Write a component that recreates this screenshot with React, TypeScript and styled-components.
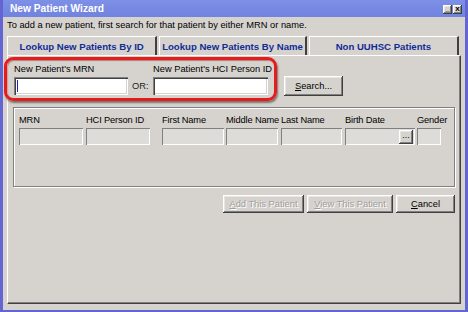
import React from "react";
import styled, { createGlobalStyle } from "styled-components";

const Global = createGlobalStyle`
  html, body { margin: 0; padding: 0; background: #d6d3ce; }
  body { font-family: "Liberation Sans", Arial, sans-serif; font-size: 9.3px; color: #000; }
`;

const raised = `
  box-shadow: inset -1px -1px #404040, inset 1px 1px #ffffff, inset -2px -2px #808080, inset 2px 2px #e8e6e2;
`;
const sunken = `
  box-shadow: inset 1px 1px #808080, inset 2px 2px #404040, inset -1px -1px #ffffff, inset -2px -2px #d6d3ce;
`;

const Window = styled.div`
  position: relative;
  width: 468px;
  height: 312px;
  box-sizing: border-box;
  background: #d6d3ce;
  border-left: 3px solid #6464d2;
  border-right: 3px solid #6464d2;
  border-bottom: 2px solid #6464d2;
  display: flex;
  flex-direction: column;
  overflow: hidden;
`;

const TitleBar = styled.div`
  height: 17px;
  margin: 0 -3px;
  padding: 0 6px 0 10px;
  background: linear-gradient(#7d8fe6, #7083de);
  display: flex;
  align-items: center;
  justify-content: space-between;
  color: #fff;
  font-weight: bold;
  font-size: 10.2px;
`;

const TitleButtons = styled.div`
  display: flex;
  gap: 1px;
  margin-top: 2px;
`;

const TitleBtn = styled.div`
  width: 9px;
  height: 9px;
  background: #d6d3ce;
  ${raised}
  color: #000;
  font-size: 8px;
  line-height: 7px;
  text-align: center;
  font-weight: bold;
`;

const Body = styled.div`
  flex: 1;
  display: flex;
  flex-direction: column;
  padding: 0 4px 6px 4px;
`;

const Intro = styled.div`
  height: 18px;
  line-height: 17px;
`;

const Tabs = styled.div`
  display: flex;
  height: 19px;
  margin-top: 1px;
`;

const Tab = styled.div<{ $w: number }>`
  width: ${(p) => p.$w}px;
  box-sizing: border-box;
  margin-right: 2px;
  background: #d6d3ce;
  border-top: 1px solid #ffffff;
  border-left: 1px solid #ffffff;
  border-right: 2px solid #404040;
  display: flex;
  align-items: center;
  justify-content: center;
  color: #122c96;
  font-weight: bold;
  font-size: 9.6px;
  white-space: nowrap;
`;

const Panel = styled.div`
  flex: 1;
  box-sizing: border-box;
  border-left: 1px solid #ffffff;
  border-top: 1px solid #ffffff;
  border-right: 1px solid #404040;
  border-bottom: 1px solid #404040;
  box-shadow: inset -1px -1px #808080;
  padding: 7px 0 0 6px;
  display: flex;
  flex-direction: column;
`;

const SearchRow = styled.div`
  display: flex;
  align-items: flex-end;
`;

const FieldCol = styled.div`
  display: flex;
  flex-direction: column;
`;

const Label = styled.div`
  height: 14px;
  line-height: 13px;
  white-space: nowrap;
`;

const ResultLabel = styled(Label)`
  letter-spacing: -0.15px;
`;

const TextInput = styled.div<{ $w: number }>`
  width: ${(p) => p.$w}px;
  height: 18px;
  background: #fff;
  ${sunken}
  position: relative;
`;

const Caret = styled.div`
  position: absolute;
  left: 3px;
  top: 3px;
  width: 1px;
  height: 12px;
  background: #2020c0;
`;

const OrText = styled.div`
  width: 25px;
  height: 18px;
  line-height: 18px;
  padding-left: 4px;
  box-sizing: border-box;
  color: #202020;
`;

const Button = styled.div<{ $w: number; $disabled?: boolean }>`
  width: ${(p) => p.$w}px;
  height: 18px;
  box-sizing: border-box;
  background: #d6d3ce;
  ${raised}
  display: flex;
  align-items: center;
  justify-content: center;
  color: ${(p) => (p.$disabled ? "#a09e9a" : "#000")};
  text-shadow: ${(p) => (p.$disabled ? "1px 1px #ffffff" : "none")};
  white-space: nowrap;
  u { text-decoration: underline; }
`;

const SearchButton = styled(Button)`
  margin-left: 12px;
  margin-bottom: -1px;
  height: 20px;
`;

const GroupBox = styled.div`
  margin: 12px 5px 0 -1px;
  height: 80px;
  box-sizing: border-box;
  border: 1px solid #808080;
  box-shadow: 1px 1px #ffffff, inset 1px 1px #ffffff;
  padding: 6px 0 0 5px;
  display: flex;
`;

const ResultCol = styled.div<{ $w: number; $ml: number }>`
  width: ${(p) => p.$w}px;
  margin-left: ${(p) => p.$ml}px;
  display: flex;
  flex-direction: column;
`;

const ResultField = styled.div`
  height: 17px;
  background: #dedcd8;
  box-shadow: inset 1px 1px #808080, inset -1px -1px #ffffff;
  position: relative;
`;

const DotsButton = styled.div`
  position: absolute;
  right: 2px;
  top: 2px;
  width: 14px;
  height: 14px;
  background: #d6d3ce;
  ${raised}
  font-size: 9px;
  line-height: 10px;
  text-align: center;
`;

const Footer = styled.div`
  display: flex;
  justify-content: flex-end;
  gap: 3px;
  margin: 8px 5px 0 0;
`;

const Highlight = styled.div`
  position: absolute;
  left: 1px;
  top: 57px;
  width: 273px;
  height: 44px;
  box-sizing: border-box;
  border: 3px solid #e61c1c;
  border-radius: 9px;
  box-shadow: 1px 2px 2px rgba(0, 0, 0, 0.45), inset 1px 1px 1px rgba(120, 0, 0, 0.4);
  pointer-events: none;
`;

const results: { label: string; w: number; ml: number; dots?: boolean }[] = [
  { label: "MRN", w: 64, ml: 0 },
  { label: "HCI Person ID", w: 64, ml: 3 },
  { label: "First Name", w: 62, ml: 12 },
  { label: "Middle Name", w: 52, ml: 2 },
  { label: "Last Name", w: 61, ml: 3 },
  { label: "Birth Date", w: 70, ml: 3, dots: true },
  { label: "Gender", w: 24, ml: 2 },
];

export default function App() {
  return (
    <>
      <Global />
      <Window>
        <TitleBar>
          <span>New Patient Wizard</span>
          <TitleButtons>
            <TitleBtn>_</TitleBtn>
            <TitleBtn>x</TitleBtn>
          </TitleButtons>
        </TitleBar>
        <Body>
          <Intro>To add a new patient, first search for that patient by either MRN or name.</Intro>
          <Tabs>
            <Tab $w={151}>Lookup New Patients By ID</Tab>
            <Tab $w={148}>Lookup New Patients By Name</Tab>
            <Tab $w={151}>Non UUHSC Patients</Tab>
          </Tabs>
          <Panel>
            <SearchRow>
              <FieldCol>
                <Label>New Patient's MRN</Label>
                <TextInput $w={114}>
                  <Caret />
                </TextInput>
              </FieldCol>
              <OrText>OR:</OrText>
              <FieldCol>
                <Label>New Patient's HCI Person ID</Label>
                <TextInput $w={115} />
              </FieldCol>
              <SearchButton $w={59}>
                <span>
                  <u>S</u>earch...
                </span>
              </SearchButton>
            </SearchRow>
            <GroupBox>
              {results.map((r) => (
                <ResultCol key={r.label} $w={r.w} $ml={r.ml}>
                  <ResultLabel>{r.label}</ResultLabel>
                  <ResultField>{r.dots && <DotsButton>...</DotsButton>}</ResultField>
                </ResultCol>
              ))}
            </GroupBox>
            <Footer>
              <Button $w={81} $disabled>
                <span>
                  <u>A</u>dd This Patient
                </span>
              </Button>
              <Button $w={86} $disabled>
                <span>
                  <u>V</u>iew This Patient
                </span>
              </Button>
              <Button $w={59}>
                <span>
                  <u>C</u>ancel
                </span>
              </Button>
            </Footer>
          </Panel>
        </Body>
        <Highlight />
      </Window>
    </>
  );
}
